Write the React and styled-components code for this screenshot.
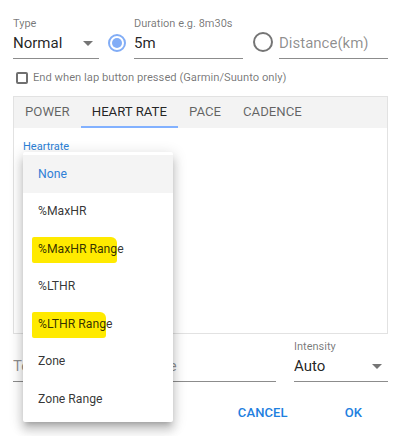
import React from 'react'
import styled, { createGlobalStyle } from 'styled-components'

const GlobalStyle = createGlobalStyle`
  body {
    margin: 0;
    background: #fff;
    font-family: Roboto, 'Liberation Sans', sans-serif;
  }
`

const Page = styled.div`
  position: relative;
  width: 402px;
  height: 436px;
  padding: 17px 14px 0 13px;
  box-sizing: border-box;
  overflow: hidden;
`

const Row = styled.div`
  display: flex;
  align-items: flex-end;
`

const Field = styled.div`
  width: ${({ width }) => width}px;
  margin-left: ${({ gap }) => gap || 0}px;
  display: flex;
  flex-direction: column;
`

const Label = styled.div`
  font-size: 11px;
  line-height: 14px;
  height: 14px;
  color: ${({ active }) => (active ? '#2b7fd6' : 'rgba(0,0,0,0.54)')};
`

const Value = styled.div`
  display: flex;
  align-items: center;
  justify-content: space-between;
  height: 24px;
  padding-bottom: 3px;
  border-bottom: 1px solid #8c8c8c;
  font-size: 15px;
  color: ${({ placeholder }) => (placeholder ? 'rgba(0,0,0,0.45)' : 'rgba(0,0,0,0.87)')};
  white-space: nowrap;
  overflow: hidden;
`

const Caret = styled.span`
  width: 0;
  height: 0;
  margin-right: 6px;
  border-left: 5px solid transparent;
  border-right: 5px solid transparent;
  border-top: 5px solid #757575;
`

const Radio = styled.span`
  flex: none;
  box-sizing: border-box;
  width: ${({ size }) => size}px;
  height: ${({ size }) => size}px;
  margin-left: ${({ gap }) => gap}px;
  margin-bottom: 7px;
  border-radius: 50%;
  border: 2px solid ${({ checked }) => (checked ? '#82adf6' : '#757575')};
  display: flex;
  align-items: center;
  justify-content: center;
  &::after {
    content: '';
    display: ${({ checked }) => (checked ? 'block' : 'none')};
    width: 10px;
    height: 10px;
    border-radius: 50%;
    background: #82adf6;
  }
`

const CheckRow = styled.div`
  display: flex;
  align-items: center;
  margin-top: 12px;
  padding-left: 3px;
  font-size: 11.2px;
  color: rgba(0,0,0,0.54);
`

const Box = styled.span`
  width: 12px;
  height: 12px;
  box-sizing: border-box;
  border: 2px solid #707070;
  border-radius: 2px;
  margin-right: 5px;
`

const Panel = styled.div`
  margin-top: 12px;
  height: 238px;
  box-sizing: border-box;
  border: 1px solid #e2e2e2;
`

const TabBar = styled.div`
  display: flex;
  height: 31px;
  background: #f3f3f3;
`

const Tab = styled.div`
  display: flex;
  align-items: center;
  padding: 0 11px;
  font-size: 13.2px;
  text-transform: uppercase;
  color: ${({ active }) => (active ? 'rgba(0,0,0,0.87)' : 'rgba(0,0,0,0.6)')};
  border-bottom: 2px solid ${({ active }) => (active ? '#82b1ff' : 'transparent')};
`

const PanelBody = styled.div`
  padding: 12px 9px;
`

const BottomRow = styled.div`
  display: flex;
  align-items: flex-end;
  margin-top: 6px;
`

const Actions = styled.div`
  display: flex;
  justify-content: flex-end;
  margin-top: 23px;
  padding-right: 26px;
  gap: 57px;
`

const Button = styled.div`
  font-size: 13px;
  font-weight: 500;
  color: #1e80e0;
  letter-spacing: 0.1px;
`

const Menu = styled.div`
  position: absolute;
  left: 23px;
  top: 152px;
  width: 150px;
  padding: 3px 0 4px;
  background: #fff;
  border-radius: 2px;
  box-shadow: 0 5px 5px -3px rgba(0,0,0,0.2), 0 8px 10px 1px rgba(0,0,0,0.14), 0 3px 14px 2px rgba(0,0,0,0.12);
`

const Item = styled.div`
  height: 37.5px;
  display: flex;
  align-items: center;
  padding-left: 15px;
  font-size: 12.2px;
  color: ${({ selected }) => (selected ? '#2f7fd6' : 'rgba(0,0,0,0.8)')};
  background: ${({ selected }) => (selected ? '#f4f4f4' : 'transparent')};
`

const Mark = styled.span`
  background: #ffea00;
  padding: 5px 0 7px 6px;
  margin-left: -6px;
  border-radius: 2px 6px 3px 2px;
`

const TABS = ['Power', 'Heart Rate', 'Pace', 'Cadence']

const OPTIONS = [
  { label: 'None', selected: true },
  { label: '%MaxHR' },
  { label: '%MaxHR Range', mark: '%MaxHR Rang' },
  { label: '%LTHR' },
  { label: '%LTHR Range', mark: '%LTHR Rang' },
  { label: 'Zone' },
  { label: 'Zone Range' },
]

export default function App() {
  return (
    <Page>
      <GlobalStyle />
      <Row>
        <Field width={86}>
          <Label>Type</Label>
          <Value>
            Normal
            <Caret />
          </Value>
        </Field>
        <Radio checked size={18} gap={9} />
        <Field width={109} gap={8}>
          <Label>Duration e.g. 8m30s</Label>
          <Value>5m</Value>
        </Field>
        <Radio size={20} gap={10} />
        <Field width={109} gap={6}>
          <Value placeholder>Distance(km)</Value>
        </Field>
      </Row>
      <CheckRow>
        <Box />
        End when lap button pressed (Garmin/Suunto only)
      </CheckRow>
      <Panel>
        <TabBar>
          {TABS.map((t) => (
            <Tab key={t} active={t === 'Heart Rate'}>{t}</Tab>
          ))}
        </TabBar>
        <PanelBody>
          <Label active>Heartrate</Label>
        </PanelBody>
      </Panel>
      <BottomRow>
        <Field width={263}>
          <Value placeholder>Text e.g. Threshold Pace</Value>
        </Field>
        <Field width={94} gap={18}>
          <Label>Intensity</Label>
          <Value>
            Auto
            <Caret />
          </Value>
        </Field>
      </BottomRow>
      <Actions>
        <Button>CANCEL</Button>
        <Button>OK</Button>
      </Actions>
      <Menu>
        {OPTIONS.map((o) => (
          <Item key={o.label} selected={o.selected}>
            {o.mark ? (
              <span>
                <Mark>{o.mark}</Mark>
                {o.label.slice(o.mark.length)}
              </span>
            ) : (
              o.label
            )}
          </Item>
        ))}
      </Menu>
    </Page>
  )
}
